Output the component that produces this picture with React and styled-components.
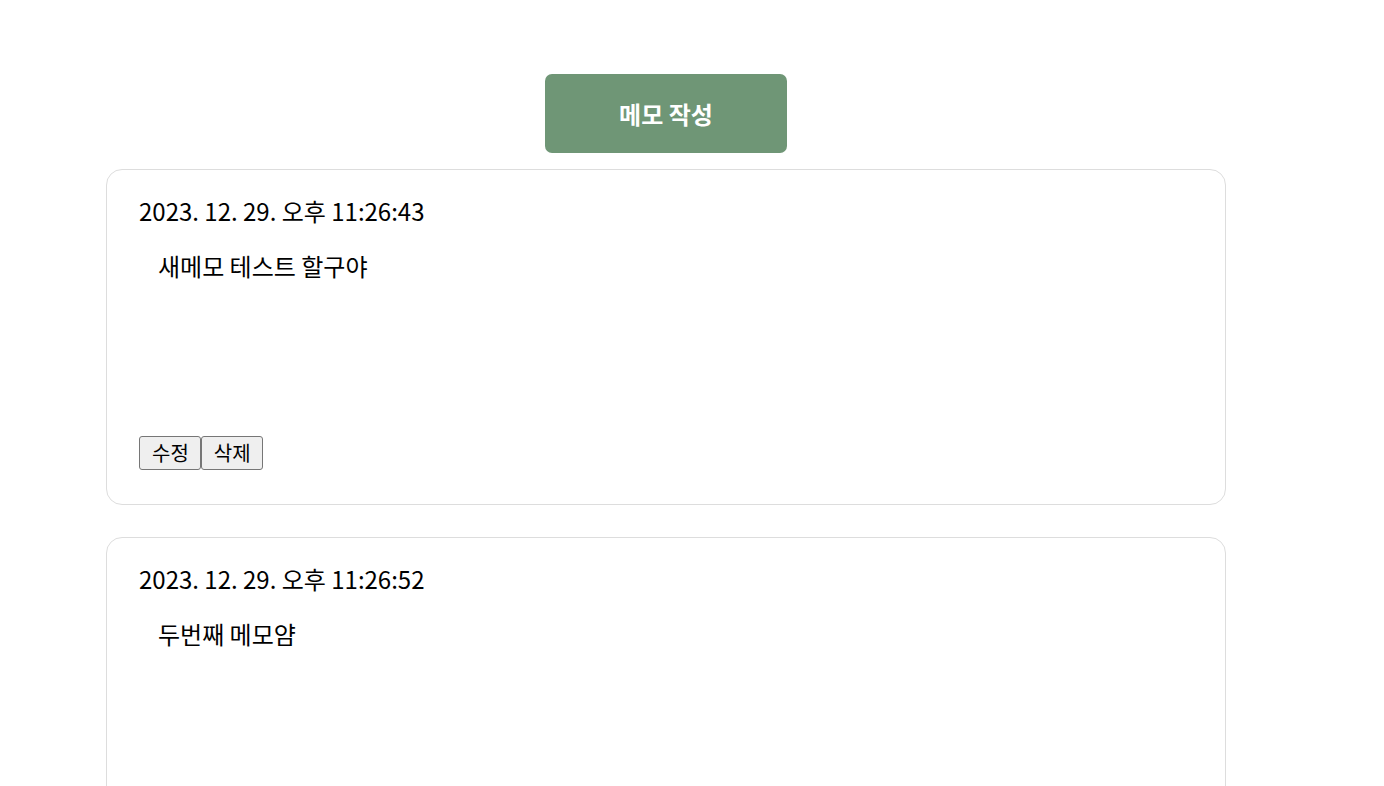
import React from "react"
import styled, { createGlobalStyle } from "styled-components"

const GlobalStyle = createGlobalStyle`
  body {
    margin: 0;
    background: #ffffff;
    font-family: "Noto Sans CJK KR", "Noto Sans", sans-serif;
    color: #000000;
  }
`

const Page = styled.main`
  width: 1120px;
  margin-left: 106px;
  padding-top: 74px;
  display: flex;
  flex-direction: column;
  align-items: center;
`

const WriteButton = styled.button`
  width: 242px;
  height: 79px;
  margin-bottom: 16px;
  border: none;
  border-radius: 7px;
  background-color: #6f9676;
  color: #ffffff;
  font-family: "Noto Sans CJK KR", sans-serif;
  font-size: 24px;
  font-weight: 700;
  cursor: pointer;
`

const MemoList = styled.div`
  display: flex;
  flex-direction: column;
  gap: 32px;
  width: 100%;
`

const MemoCard = styled.article`
  box-sizing: border-box;
  width: 100%;
  padding: 25px 32px 34px;
  border: 1px solid #dddddd;
  border-radius: 16px;
`

const MemoDate = styled.div`
  font-size: 24px;
  line-height: 32px;
`

const MemoBody = styled.div`
  height: 186px;
  padding: 23px 19px 0;
  font-size: 24px;
  line-height: 32px;
`

const Actions = styled.div`
  display: flex;
`

const ActionButton = styled.button`
  height: 34px;
  padding: 0 11px 0 12px;
  border: 1px solid #767676;
  border-radius: 3px;
  background-color: #efefef;
  font-family: "Noto Sans CJK KR", sans-serif;
  font-size: 20px;
  line-height: 1;
  color: #000000;
`

const memos = [
  { id: 1, date: "2023. 12. 29. 오후 11:26:43", text: "새메모 테스트 할구야" },
  { id: 2, date: "2023. 12. 29. 오후 11:26:52", text: "두번째 메모얌" },
]

export default function App() {
  return (
    <>
      <GlobalStyle />
      <Page>
        <WriteButton>메모 작성</WriteButton>
        <MemoList>
          {memos.map((memo) => (
            <MemoCard key={memo.id}>
              <MemoDate>{memo.date}</MemoDate>
              <MemoBody>{memo.text}</MemoBody>
              <Actions>
                <ActionButton>수정</ActionButton>
                <ActionButton>삭제</ActionButton>
              </Actions>
            </MemoCard>
          ))}
        </MemoList>
      </Page>
    </>
  )
}
